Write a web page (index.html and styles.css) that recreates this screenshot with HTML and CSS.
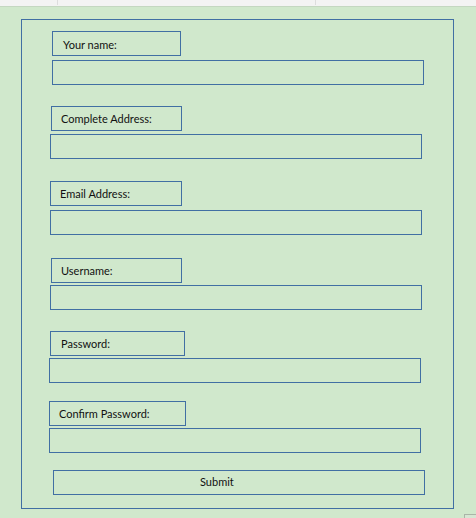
FILE: index.html
```html
<!DOCTYPE html>
<html>
<head>
<meta charset="utf-8">
<link rel="stylesheet" href="styles.css">
</head>
<body>
<div class="topbar"><span class="cell cell-a"></span><span class="cell cell-b"></span></div>
<div class="sheet">
  <form class="frame">
    <label class="tag tag-name">Your name:</label>
    <input class="box box-name" type="text">
    <label class="tag tag-addr">Complete Address:</label>
    <input class="box box-addr" type="text">
    <label class="tag tag-mail">Email Address:</label>
    <input class="box box-mail" type="text">
    <label class="tag tag-user">Username:</label>
    <input class="box box-user" type="text">
    <label class="tag tag-pass">Password:</label>
    <input class="box box-pass" type="password">
    <label class="tag tag-conf">Confirm Password:</label>
    <input class="box box-conf" type="password">
    <button class="submit" type="button">Submit</button>
  </form>
  <span class="corner"></span>
</div>
</body>
</html>
```
FILE: styles.css
```css
html, body {
  margin: 0;
  padding: 0;
}
body {
  width: 476px;
  height: 518px;
  overflow: hidden;
  font-family: Lato, "Open Sans", sans-serif;
  font-size: 11px;
  color: #111;
}
.topbar {
  display: flex;
  height: 6px;
  background: #f3f3f3;
  border-bottom: 1px solid #c4d7c1;
}
.cell {
  height: 5px;
  border-right: 1px solid #dddddd;
}
.cell-a { width: 57px; }
.cell-b { width: 257px; }
.sheet {
  position: relative;
  height: 511px;
  background: #d0e8cc;
  padding: 12px 0 0 21px;
  box-sizing: border-box;
}
.frame {
  width: 433px;
  height: 490px;
  border: 1px solid #416fa3;
  box-sizing: border-box;
  margin: 0;
}
.tag, .box, .submit {
  display: block;
  box-sizing: border-box;
  height: 25px;
  border: 1px solid #416fa3;
  background: transparent;
  font-family: Lato, "Open Sans", sans-serif;
  font-size: 11px;
  color: #111;
  margin-left: 28px;
}
.tag {
  padding: 5px 0 0 9px;
  line-height: 13px;
}
.box {
  width: 372px;
  padding: 0;
  outline: none;
}
.tag-name { margin-top: 11px; margin-left: 30px; width: 129px; padding-left: 10px; padding-top: 6px; }
.box-name { margin-top: 4px; margin-left: 30px; }
.tag-addr { margin-top: 21px; margin-left: 29px; width: 131px; }
.box-addr { margin-top: 3px; }
.tag-mail { margin-top: 22px; width: 132px; }
.box-mail { margin-top: 4px; }
.tag-user { margin-top: 23px; margin-left: 29px; width: 131px; }
.box-user { margin-top: 2px; }
.tag-pass { margin-top: 21px; width: 135px; padding-left: 10px; }
.box-pass { margin-top: 2px; margin-left: 27px; }
.tag-conf { margin-top: 18px; margin-left: 27px; width: 137px; }
.box-conf { margin-top: 2px; margin-left: 27px; }
.submit {
  margin-top: 17px;
  margin-left: 31px;
  width: 372px;
  padding: 0 0 2px 146px;
  line-height: 13px;
  text-align: left;
  cursor: pointer;
}
.corner {
  position: absolute;
  left: 464px;
  top: 507px;
  width: 12px;
  height: 6px;
  border-top: 1px solid #a9b5a7;
  border-left: 1px solid #a9b5a7;
  background: #d6e6d3;
}
```
